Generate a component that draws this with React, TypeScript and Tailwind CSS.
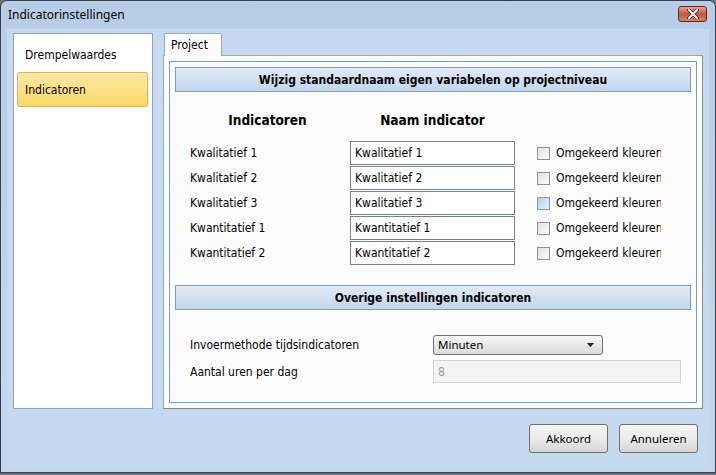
import React from 'react';

const TAH = "font-['DejaVu_Sans_Condensed','DejaVu_Sans',sans-serif]";
const SEG = "font-['Noto_Sans','Open_Sans',sans-serif]";

const rows = [
    { label: 'Kwalitatief 1', value: 'Kwalitatief 1', hover: false },
    { label: 'Kwalitatief 2', value: 'Kwalitatief 2', hover: false },
    { label: 'Kwalitatief 3', value: 'Kwalitatief 3', hover: true },
    { label: 'Kwantitatief 1', value: 'Kwantitatief 1', hover: false },
    { label: 'Kwantitatief 2', value: 'Kwantitatief 2', hover: false },
];

const SectionBar = ({ title }: { title: string }) => (
    <div className="flex h-[25px] items-center justify-center border border-[#7f9db9] bg-gradient-to-b from-[#e2ebf6] to-[#c2d6ec] text-[12px] font-bold text-black">
        {title}
    </div>
);

const Checkbox = ({ hover }: { hover: boolean }) => (
    <div
        className={
            hover
                ? 'h-[13px] w-[13px] shrink-0 border border-[#7a9cc4] bg-gradient-to-br from-[#b8cfe9] to-[#eaf2fb]'
                : 'h-[13px] w-[13px] shrink-0 border border-[#8e8f8f] bg-gradient-to-br from-[#e2e2e2] to-[#fbfbfb]'
        }
    />
);

const CloseButton = () => (
    <div className="flex h-[16px] w-[29px] items-center justify-center rounded-[3px] border border-[#6b2218] bg-gradient-to-b from-[#e2a598] via-[#c5553f] to-[#d5836a]">
        <svg width="12" height="10" viewBox="0 0 12 10">
            <path d="M2 1 L10 9 M10 1 L2 9" stroke="#4a1a12" strokeWidth="3.6" strokeLinecap="square" />
            <path d="M2 1 L10 9 M10 1 L2 9" stroke="#ffffff" strokeWidth="2" strokeLinecap="square" />
        </svg>
    </div>
);

export default function App() {
    return (
        <div className="h-[475px] w-[716px] overflow-hidden bg-[#6e7175]">
            <div className="flex h-[473px] flex-col rounded-t-[7px] border border-[#34404e] bg-gradient-to-b from-[#b7cde6] to-[#c3d8ee]">
                {/* title bar */}
                <div className="flex h-[28px] items-center justify-between pl-[7px] pr-[8px]">
                    <span className={`${SEG} text-[12px] text-black`}>Indicatorinstellingen</span>
                    <div className="-mt-[3px]">
                        <CloseButton />
                    </div>
                </div>

                {/* client */}
                <div className="mx-[6px] mb-[6px] flex flex-1 flex-col bg-[#c6daef] px-[6px] pt-[4px]">
                    <div className="flex gap-[10px]">
                        {/* left nav */}
                        <div className={`${TAH} h-[376px] w-[140px] border border-[#8ea2bc] bg-white p-[3px] text-[12px] text-black`}>
                            <div className="flex h-[35px] items-center pl-[8px]">Drempelwaardes</div>
                            <div className="mr-[1px] flex h-[35px] items-center rounded-[2px] border border-[#d9b25c] bg-gradient-to-b from-[#fde9a4] to-[#fdd665] pl-[7px]">
                                Indicatoren
                            </div>
                        </div>

                        {/* tab area */}
                        <div className="flex w-[540px] flex-col">
                            <div className="flex">
                                <div className={`${TAH} relative z-10 -mb-px ml-[1px] flex h-[23px] w-[58px] items-center rounded-t-[2px] border border-b-0 border-[#9da9b8] bg-[#fcfcfc] pl-[6px] text-[12px] text-black`}>
                                    Project
                                </div>
                            </div>
                            <div className="h-[354px] border border-[#a3a3a3] border-r-[#8a8a8a] border-b-[#8a8a8a] bg-white p-[5px]">
                                <div className={`${TAH} h-full border border-[#7f9db9] bg-[#fcfcfc] p-[5px] text-[12px] text-black`}>
                                    <SectionBar title="Wijzig standaardnaam eigen variabelen op projectniveau" />

                                    <div className="flex pb-[12px] pt-[19px] text-[13.5px] font-bold leading-[18px]">
                                        <div className="w-[175px] pl-[10px] text-center">Indicatoren</div>
                                        <div className="w-[165px] text-center">Naam indicator</div>
                                    </div>

                                    <div className="flex flex-col gap-[1px]">
                                        {rows.map((r) => (
                                            <div key={r.label} className="flex h-[24px] items-center">
                                                <div className="w-[175px] pl-[15px]">{r.label}</div>
                                                <div className="flex h-[24px] w-[165px] items-center border border-[#76828f] bg-white pl-[4px]">
                                                    {r.value}
                                                </div>
                                                <div className="ml-[22px] flex w-[124px] items-center gap-[6px] overflow-hidden whitespace-nowrap">
                                                    <Checkbox hover={r.hover} />
                                                    <span>Omgekeerd kleuren</span>
                                                </div>
                                            </div>
                                        ))}
                                    </div>

                                    <div className="mt-[20px]">
                                        <SectionBar title="Overige instellingen indicatoren" />
                                    </div>

                                    <div className="mt-[25px] flex h-[20px] items-center">
                                        <div className="w-[258px] pl-[15px]">Invoermethode tijdsindicatoren</div>
                                        <div className={`${SEG} flex h-[20px] w-[170px] items-center justify-between rounded-[3px] border border-[#707070] bg-gradient-to-b from-[#f6f6f6] to-[#dcdcdc] pl-[4px] pr-[8px] text-[11.5px]`}>
                                            <span>Minuten</span>
                                            <svg width="7" height="4" viewBox="0 0 7 4">
                                                <path d="M0 0 L7 0 L3.5 4 Z" fill="#222" />
                                            </svg>
                                        </div>
                                    </div>

                                    <div className="mt-[5px] flex h-[23px] items-center">
                                        <div className="w-[258px] pl-[15px]">Aantal uren per dag</div>
                                        <div className="flex h-[23px] w-[248px] items-center border border-[#d2d2d2] bg-[#f4f4f4] pl-[4px] text-[#9a9a9a]">
                                            8
                                        </div>
                                    </div>
                                </div>
                            </div>
                        </div>
                    </div>

                    {/* buttons */}
                    <div className={`${SEG} mt-[15px] flex justify-end gap-[11px] pr-[5px] text-[11.5px] text-black`}>
                        <div className="flex h-[29px] w-[79px] items-center justify-center rounded-[3px] border border-[#707070] bg-gradient-to-b from-[#f4f4f4] via-[#ebebeb] to-[#d4d4d4]">
                            Akkoord
                        </div>
                        <div className="flex h-[29px] w-[79px] items-center justify-center rounded-[3px] border border-[#707070] bg-gradient-to-b from-[#f4f4f4] via-[#ebebeb] to-[#d4d4d4]">
                            Annuleren
                        </div>
                    </div>
                </div>
            </div>
        </div>
    );
}
